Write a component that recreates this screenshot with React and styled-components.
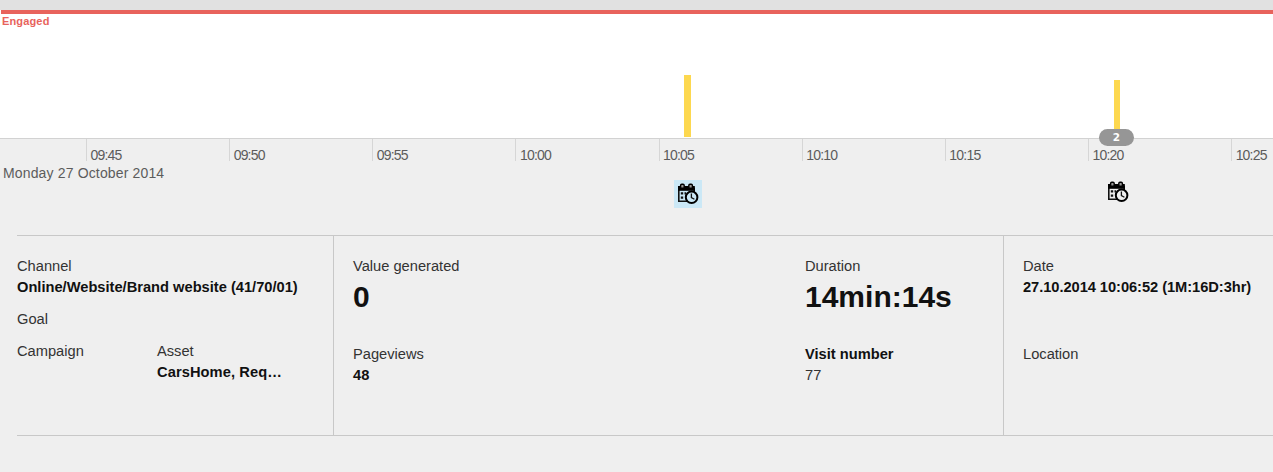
import React from 'react';
import styled, { createGlobalStyle } from 'styled-components';

const GlobalStyle = createGlobalStyle`
  *, *::before, *::after { box-sizing: border-box; }
  body {
    margin: 0;
    background: #efefef;
    color: #111;
    font-family: "Liberation Sans", Arial, sans-serif;
    overflow: hidden;
  }
`;

const Page = styled.main`
  width: 1273px;
  height: 472px;
  overflow: hidden;
`;

const TopStrip = styled.div`
  height: 10px;
  background: #e1e1e1;
`;

const Chart = styled.section`
  position: relative;
  height: 129px;
  background: #fff;
  border-bottom: 1px solid #d2d2d2;
`;

const SeriesLine = styled.div`
  height: 4px;
  margin-left: 1px;
  background: #e8635c;
`;

const SeriesLabel = styled.div`
  padding-left: 2px;
  font-size: 11px;
  font-weight: bold;
  line-height: 14px;
  letter-spacing: 0.15px;
  color: #e8635c;
`;

const Bar = styled.div`
  position: absolute;
  left: ${(p) => p.$x}px;
  bottom: ${(p) => p.$bottom}px;
  width: ${(p) => p.$width}px;
  height: ${(p) => p.$height}px;
  background: #fdd84f;
`;

const Badge = styled.span`
  position: absolute;
  left: 1099px;
  top: 119px;
  width: 35px;
  height: 17px;
  border-radius: 9px;
  background: #969696;
  color: #fff;
  font: bold 10.5px/17px "DejaVu Sans", sans-serif;
  text-align: center;
`;

const Axis = styled.div`
  display: flex;
  height: 22px;
  padding-left: 86px;
`;

const Tick = styled.div`
  flex: 0 0 143.15px;
  padding: 8px 0 0 3.5px;
  border-left: 1px solid #d6d6d6;
  font-size: 14px;
  line-height: 16px;
  letter-spacing: -0.8px;
  color: #5c5c5c;
`;

const DayLabel = styled.div`
  height: 19px;
  padding: 4px 0 0 3px;
  font-size: 14px;
  line-height: 16px;
  letter-spacing: 0.15px;
  color: #5c5c5c;
`;

const EventLane = styled.div`
  position: relative;
  height: 55px;
`;

const EventMarker = styled.div`
  --surface: ${(p) => (p.$selected ? '#cbe8f6' : '#efefef')};
  position: absolute;
  left: ${(p) => p.$x}px;
  top: ${(p) => p.$y}px;
  width: 28px;
  height: 28px;
  background: var(--surface);

  svg { display: block; }
`;

const ClockFace = styled.circle`
  fill: var(--surface);
`;

const Details = styled.section`
  display: grid;
  grid-template-columns: 316px 670px 1fr;
  height: 201px;
  margin-left: 17px;
  border: solid #c8c8c8;
  border-width: 1px 0;
`;

const Panel = styled.div`
  display: grid;
  grid-template-columns: ${(p) => p.$columns || '1fr'};
  grid-template-rows: ${(p) => p.$rows};
  padding: 20px 0 0 ${(p) => p.$inset || 0}px;
  border-left: ${(p) => (p.$inset ? '1px solid #c8c8c8' : '0')};
`;

const Field = styled.div`
  grid-column: ${(p) => (p.$wide ? '1 / -1' : 'auto')};
  min-width: 0;
  font-size: 14.667px;
  line-height: 21px;
  white-space: nowrap;
`;

const Label = styled.div`
  color: ${(p) => (p.$strong ? '#111' : '#333')};
  font-weight: ${(p) => (p.$strong ? 'bold' : 'normal')};
`;

const Value = styled.div`
  font-weight: ${(p) => (p.$light ? 'normal' : 'bold')};
  color: ${(p) => (p.$light ? '#333' : '#111')};
  letter-spacing: ${(p) => p.$tracking || 0}px;
`;

const BigValue = styled.div`
  font-size: 30px;
  font-weight: bold;
  line-height: 40px;
`;

const TIMES = ['09:45', '09:50', '09:55', '10:00', '10:05', '10:10', '10:15', '10:20', '10:25'];

function CalendarClock() {
  return (
    <svg width="28" height="28" viewBox="0 0 28 28" aria-hidden="true">
      <path d="M4.8 7.5V21.2H13M20.2 7.5V12" fill="none" stroke="#111" strokeWidth="1.6" />
      <path d="M4 6h16.8v4.8H4z" fill="#000" />
      <rect x="6.6" y="4.2" width="3.6" height="4" rx="1.2" fill="#999" stroke="#000" strokeWidth="1.4" />
      <rect x="14.8" y="4.2" width="3.6" height="4" rx="1.2" fill="#999" stroke="#000" strokeWidth="1.4" />
      <path d="M6.8 12.2h2.4v2.3H6.8zM10.5 12.2h1.6v2.3h-1.6zM6.8 16.4h2.4v2.3H6.8z" fill="#111" />
      <ClockFace cx="17.6" cy="17.3" r="5.8" stroke="#000" strokeWidth="2" />
      <path d="M17.4 13.6v4l3 1.6" fill="none" stroke="#111" strokeWidth="1.3" />
    </svg>
  );
}

export default function App() {
  return (
    <>
      <GlobalStyle />
      <Page>
        <TopStrip />
        <Chart>
          <SeriesLine />
          <SeriesLabel>Engaged</SeriesLabel>
          <Bar $x={684.3} $bottom={1} $width={7} $height={62} />
          <Bar $x={1114} $bottom={0} $width={6} $height={58} />
          <Badge>2</Badge>
        </Chart>
        <Axis>
          {TIMES.map((time) => (
            <Tick key={time}>{time}</Tick>
          ))}
        </Axis>
        <DayLabel>Monday 27 October 2014</DayLabel>
        <EventLane>
          <EventMarker $x={674} $y={0} $selected><CalendarClock /></EventMarker>
          <EventMarker $x={1104} $y={-2}><CalendarClock /></EventMarker>
        </EventLane>
        <Details>
          <Panel $columns="140px 1fr" $rows="53px 32px 42px">
            <Field $wide>
              <Label>Channel</Label>
              <Value>Online/Website/Brand website (41/70/01)</Value>
            </Field>
            <Field $wide><Label>Goal</Label></Field>
            <Field><Label>Campaign</Label></Field>
            <Field>
              <Label>Asset</Label>
              <Value $tracking={0.08}>CarsHome, Req…</Value>
            </Field>
          </Panel>
          <Panel $inset={19} $columns="452px 1fr" $rows="88px 42px">
            <Field><Label>Value generated</Label><BigValue>0</BigValue></Field>
            <Field><Label>Duration</Label><BigValue>14min:14s</BigValue></Field>
            <Field><Label>Pageviews</Label><Value>48</Value></Field>
            <Field><Label $strong>Visit number</Label><Value $light>77</Value></Field>
          </Panel>
          <Panel $inset={19} $rows="88px 42px">
            <Field><Label>Date</Label><Value $tracking={-0.05}>27.10.2014 10:06:52 (1M:16D:3hr)</Value></Field>
            <Field><Label>Location</Label></Field>
          </Panel>
        </Details>
      </Page>
    </>
  );
}
